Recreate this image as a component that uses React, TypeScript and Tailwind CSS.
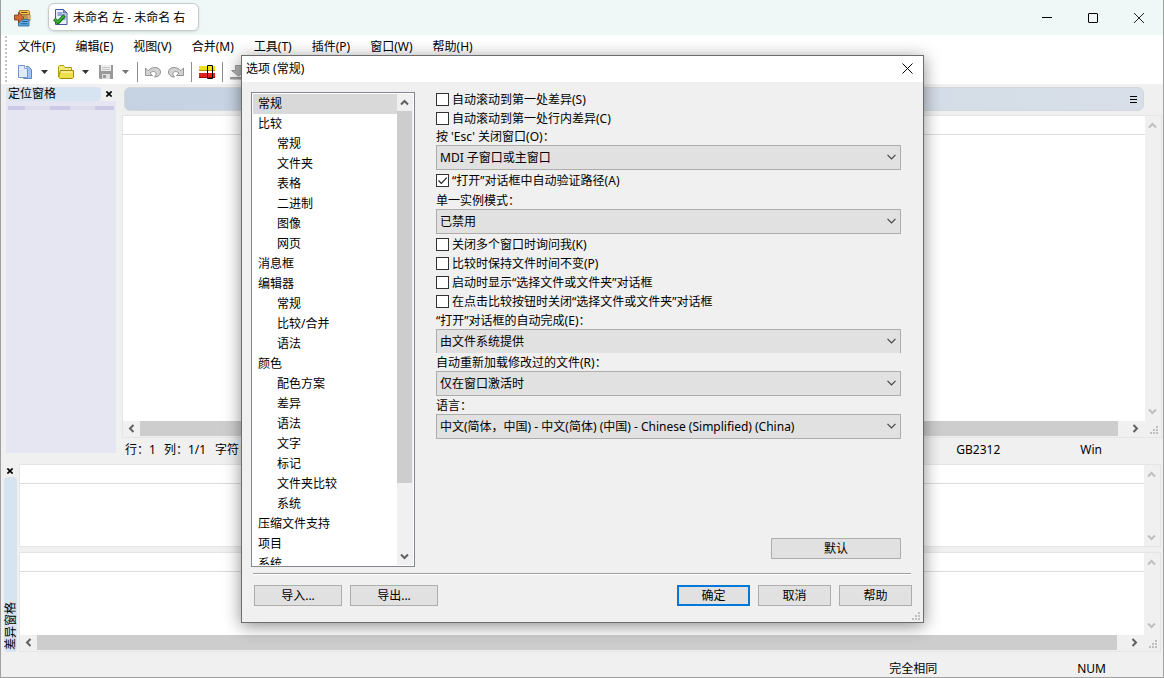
import React from "react";

const FONT = "font-['Noto_Sans','Noto_Sans_CJK_SC',sans-serif]";

const menus = ["文件(F)", "编辑(E)", "视图(V)", "合并(M)", "工具(T)", "插件(P)", "窗口(W)", "帮助(H)"];

const tree = [
  { label: "常规", level: 0 },
  { label: "比较", level: 0 },
  { label: "常规", level: 1 },
  { label: "文件夹", level: 1 },
  { label: "表格", level: 1 },
  { label: "二进制", level: 1 },
  { label: "图像", level: 1 },
  { label: "网页", level: 1 },
  { label: "消息框", level: 0 },
  { label: "编辑器", level: 0 },
  { label: "常规", level: 1 },
  { label: "比较/合并", level: 1 },
  { label: "语法", level: 1 },
  { label: "颜色", level: 0 },
  { label: "配色方案", level: 1 },
  { label: "差异", level: 1 },
  { label: "语法", level: 1 },
  { label: "文字", level: 1 },
  { label: "标记", level: 1 },
  { label: "文件夹比较", level: 1 },
  { label: "系统", level: 1 },
  { label: "压缩文件支持", level: 0 },
  { label: "项目", level: 0 },
  { label: "系统", level: 0 },
];

const arrowPaths = {
  up: "M1 6.5 4.5 3 8 6.5",
  down: "M1 2.5 4.5 6 8 2.5",
  left: "M6.5 1 3 4.5 6.5 8",
  right: "M2.5 1 6 4.5 2.5 8",
};

const Arrow = ({ dir, color = "#606060" }: { dir: keyof typeof arrowPaths; color?: string }) => (
  <svg width="9" height="9" viewBox="0 0 9 9" fill="none" stroke={color} strokeWidth="2">
    <path d={arrowPaths[dir]} />
  </svg>
);

const Grip = () => (
  <svg width="8" height="8" viewBox="0 0 8 8" fill="#bfbfbf" shapeRendering="crispEdges">
    <path d="M6 0h2v2H6zM3 3h2v2H3zM6 3h2v2H6zM0 6h2v2H0zM3 6h2v2H3zM6 6h2v2H6z" />
  </svg>
);

const CloseX = () => (
  <svg width="6" height="6" viewBox="0 0 6 6" stroke="#000" strokeWidth="1.6">
    <path d="M.4.4l5.2 5.2M5.6.4.4 5.6" />
  </svg>
);

const Caret = ({ color = "#333" }: { color?: string }) => (
  <svg width="7" height="4" viewBox="0 0 7 4" fill={color}>
    <path d="M0 0h7L3.5 4z" />
  </svg>
);

// Text area with a ruler line, a disabled vertical bar and an optional horizontal bar
const Editor = ({ className, hscroll }: { className: string; hscroll?: boolean }) => (
  <div className={`flex border border-[#e5e5e5] ${className}`}>
    <div className="flex min-w-0 flex-1 flex-col">
      <div className="flex-1 bg-white">
        <div className="h-[19px] border-b border-[#dcdcdc]" />
      </div>
      {hscroll && (
        <div className="flex h-4 pb-px">
          <div className="grid w-[17px] place-items-center pr-px">
            <Arrow dir="left" />
          </div>
          <div className="flex-1 bg-[#cdcdcd]" />
          <div className="grid w-[27px] place-items-center pl-2">
            <Arrow dir="right" />
          </div>
        </div>
      )}
    </div>
    <div className="flex w-4 flex-col items-center pt-[5px] pr-[2px]">
      <Arrow dir="up" color="#bfbfbf" />
      <span className="flex-1" />
      <Arrow dir="down" color="#bfbfbf" />
      {hscroll ? (
        <div className="flex h-[21px] items-end pb-[3px] pl-1">
          <Grip />
        </div>
      ) : (
        <div className="h-1" />
      )}
    </div>
  </div>
);

const Check = ({ label, checked }: { label: string; checked?: boolean }) => (
  <label className="flex h-[19px] items-center gap-[3px]">
    <span className="grid">
      <input
        type="checkbox"
        defaultChecked={checked}
        className="peer col-start-1 row-start-1 size-[13px] appearance-none border border-[#333] bg-white"
      />
      <svg
        viewBox="0 0 13 13"
        className="pointer-events-none invisible col-start-1 row-start-1 size-[13px] peer-checked:visible"
        fill="none"
        stroke="#222"
        strokeWidth="1.2"
      >
        <path d="M2.5 6.5 5.3 9.3 10.8 3.6" />
      </svg>
    </span>
    <span className="pt-[2px]">{label}</span>
  </label>
);

const Field = ({ id, label, value, cut }: { id: string; label: string; value: string; cut?: boolean }) => (
  <div>
    <label htmlFor={id} className="block h-[17px] leading-[17px]">
      {label}
    </label>
    <div className="grid">
      <select
        id={id}
        className={`col-start-1 row-start-1 w-full appearance-none border-x border-t border-[#adadad] bg-[#e1e1e1] pt-[2px] pl-[3px] ${
          cut ? "h-6" : "h-[25px] border-b"
        }`}
      >
        <option>{value}</option>
      </select>
      <svg
        width="9"
        height="6"
        viewBox="0 0 9 6"
        className="pointer-events-none col-start-1 row-start-1 mr-[5px] self-center justify-self-end"
        fill="none"
        stroke="#444"
        strokeWidth="1.2"
      >
        <path d="M.5.8 4.5 4.8 8.5.8" />
      </svg>
    </div>
  </div>
);

const Button = ({ children, className }: { children: React.ReactNode; className: string }) => (
  <button type="button" className={`h-[21px] bg-[#e1e1e1] leading-[17px] ${className}`}>
    {children}
  </button>
);

const TitleBar = () => (
  <header className="flex h-[35px] shrink-0 bg-[#eff7f7]">
    <div className="flex items-center pl-[13px]">
      <svg width="17" height="18" viewBox="0 0 17 18">
        <path d="M5.5 1.5h9l1 1v6h-10z" fill="#ffc14d" stroke="#8a6420" strokeWidth=".8" />
        <path d="M6.5 5.500h9.500v6H6.500z" fill="#ffd890" stroke="#8a6420" strokeWidth=".8" />
        <path d="M4.5 10.500h10.500v6.500H4.500z" fill="#65b1e8" stroke="#235f96" strokeWidth=".8" />
        <path d="M7 3.500h6.500M9 7h5.500M9 9h5.500" stroke="#6a5120" />
        <path d="M8 12.500h5.500M6.500 14.800h7" stroke="#185789" />
        <path d="M.5 6h4V3.200L10 8.600l-5.500 5.400v-3h-4z" fill="#d66b32" stroke="#6e3516" strokeWidth=".8" />
      </svg>
      <button
        type="button"
        className="mb-px ml-[17px] flex h-[28px] w-[151px] items-center gap-[5px] rounded-md border border-[#c6cccc] bg-white pl-1 shadow-sm"
      >
        <svg width="15" height="16" viewBox="0 0 15 16">
          <path d="M2.500.5h8l3.500 3.500v11.500H2.500z" fill="#e9eefb" stroke="#4257a5" />
          <path d="M10.500.5V4H14z" fill="#8f9fdb" stroke="#4257a5" strokeWidth=".7" />
          <path d="M4.500 4h5M4.500 6h8M8 8h4.500M9 10h3.500" stroke="#3f5bb5" />
          <path d="M1.200 10 5 13.500 11.500 6.500" fill="none" stroke="#146b14" strokeWidth="3.600" />
          <path d="M1.500 10.200 5 13.200 11 6.800" fill="none" stroke="#35b52f" strokeWidth="1.800" />
        </svg>
        <span className="pt-[2px]">未命名 左 - 未命名 右</span>
      </button>
    </div>
    <div className="ml-auto flex pr-px">
      <button type="button" aria-label="最小化" className="grid w-[46px] place-items-center">
        <svg width="10" height="10" viewBox="0 0 10 10" stroke="#000">
          <path d="M0 4.500h10" />
        </svg>
      </button>
      <button type="button" aria-label="最大化" className="grid w-[46px] place-items-center">
        <svg width="10" height="10" viewBox="0 0 10 10" stroke="#000" fill="none">
          <rect x=".5" y=".5" width="9" height="9" rx=".5" />
        </svg>
      </button>
      <button type="button" aria-label="关闭" className="grid w-[46px] place-items-center">
        <svg width="10" height="10" viewBox="0 0 10 10" stroke="#222">
          <path d="M0 0l10 10M10 0 0 10" />
        </svg>
      </button>
    </div>
  </header>
);

const Separator = () => <span className="h-5 w-px bg-[#8c8c8c]" />;

const Toolbar = () => (
  <div className="flex h-[25px] items-center">
    <div className="flex items-center gap-[9px] pl-[10px]">
      <button type="button" aria-label="新建" className="flex items-center gap-2">
        <svg width="16" height="16" viewBox="0 0 16 16">
          <path d="M6.500 2.500h5l3 3v9h-8z" fill="#9fc3f2" stroke="#5f86c2" />
          <path d="M1.500 1.500h6l3 3v9h-9z" fill="#dfebfb" stroke="#6f96d0" />
          <path d="M7.500 1.500v3h3" fill="#fff" stroke="#6f96d0" strokeWidth=".8" />
        </svg>
        <Caret />
      </button>
      <button type="button" aria-label="打开" className="flex items-center gap-2">
        <svg width="17" height="16" viewBox="0 0 17 16">
          <path d="M1.500 13V2.500l1-1h4l1.500 2h6.500V7" fill="#f3e97a" stroke="#b39c1c" />
          <path d="M3.500 6.500h13v7l-1 1H3.500l-2-1.500z" fill="#eee04a" stroke="#a08a12" />
          <path d="M4.500 8h11" stroke="#fffbc0" />
        </svg>
        <Caret />
      </button>
      <button type="button" aria-label="保存" className="flex items-center gap-2">
        <svg width="16" height="16" viewBox="0 0 16 16">
          <path d="M1 1h14v14H2l-1-1z" fill="#999" />
          <path d="M3 1h10v6H3z" fill="#efefef" />
          <path d="M4 3.500h8M4 5.500h8" stroke="#c4c4c4" />
          <path d="M4 10h8v5H4z" fill="#e0e0e0" />
          <path d="M5 11h3v3H5z" fill="#999" />
        </svg>
        <Caret color="#777" />
      </button>
    </div>
    <div className="flex items-center gap-[7px] pl-2">
      <Separator />
      <button type="button" aria-label="撤销">
        <svg width="16" height="14" viewBox="0 0 16 14" fill="#d2d2d2" stroke="#8b8b8b" strokeWidth=".9">
          <path d="M.5 3v7.500h7L5 8c3-2.600 6.500-1.500 6 1.500-.2 1-.8 1.800-1.500 2.500 4 0 6-2.300 6-5 0-5-7.500-6.500-12.300-1.300z" />
        </svg>
      </button>
      <button type="button" aria-label="重做">
        <svg width="16" height="14" viewBox="0 0 16 14" fill="#d2d2d2" stroke="#8b8b8b" strokeWidth=".9">
          <path d="M15.500 3v7.500h-7L11 8C8 5.400 4.500 6.500 5 9.500c.2 1 .8 1.800 1.500 2.500-4 0-6-2.300-6-5C.5 2 8 .5 12.800 5.700z" />
        </svg>
      </button>
      <Separator />
      <button type="button" aria-label="当前差异">
        <svg width="16" height="16" viewBox="0 0 16 16">
          <path d="M0 2h16v5H0z" fill="#f0e016" />
          <path d="M0 6h16v1H0z" fill="#b39700" />
          <path d="M0 9h16v5H0z" fill="#e51f1f" />
          <path d="M0 13h16v1H0z" fill="#9c0808" />
          <path d="M8.500 1.500h5v13h-5z" fill="none" stroke="#000" />
        </svg>
      </button>
      <Separator />
      <button type="button" aria-label="下一差异">
        <svg width="16" height="16" viewBox="0 0 16 16" fill="#b5b5b5" stroke="#999">
          <path d="M5.500 1.500h6v5h4L8.500 12 1.500 6.500h4z" />
          <path d="M.5 13.500h15v1.500H.5z" />
        </svg>
      </button>
    </div>
  </div>
);

const OptionsDialog = () => (
  <div className="absolute inset-0 flex items-center justify-center pl-px">
    <section
      role="dialog"
      aria-label="选项 (常规)"
      className="flex h-[568px] w-[683px] flex-col border border-[#6d6d6d] bg-[#f0f0f0] shadow-[0_3px_16px_rgba(0,0,0,0.45)]"
    >
      <div className="flex h-[26px] items-center justify-between bg-white pr-[10px] pl-1">
        <h1>选项 (常规)</h1>
        <button type="button" aria-label="关闭">
          <svg width="11" height="11" viewBox="0 0 11 11" stroke="#000">
            <path d="M.5.5l10 10M10.500.5l-10 10" />
          </svg>
        </button>
      </div>

      <div className="flex min-h-0 flex-1 gap-[21px] pt-2 pr-[22px] pb-[6px] pl-[9px]">
        <div className="mt-[2px] flex w-[164px] border border-[#828790] bg-white p-px">
          <ul className="min-w-0 flex-1 overflow-hidden">
            {tree.map((item, index) => (
              <li
                key={index}
                className={`h-5 leading-5 ${item.level ? "pl-6" : "pl-[5px]"} ${index === 0 ? "bg-[#d9d9d9]" : ""}`}
              >
                {item.label}
              </li>
            ))}
          </ul>
          <div className="flex w-4 flex-col bg-[#f0f0f0]">
            <div className="grid h-[17px] place-items-center pr-px">
              <Arrow dir="up" />
            </div>
            <div className="mr-px flex-1 bg-[#cdcdcd]" />
            <div className="flex h-[82px] items-end justify-center pr-[2px] pb-1">
              <Arrow dir="down" />
            </div>
          </div>
        </div>

        <form className="flex flex-1 flex-col">
          <Check label="自动滚动到第一处差异(S)" />
          <Check label="自动滚动到第一处行内差异(C)" />
          <Field id="esc" label="按 'Esc' 关闭窗口(O)：" value="MDI 子窗口或主窗口" />
          <div className="pt-px pb-[2px]">
            <Check label="“打开”对话框中自动验证路径(A)" checked />
          </div>
          <Field id="instance" label="单一实例模式：" value="已禁用" />
          <div className="pt-px pb-px">
            <Check label="关闭多个窗口时询问我(K)" />
            <Check label="比较时保持文件时间不变(P)" />
            <Check label="启动时显示“选择文件或文件夹”对话框" />
            <Check label="在点击比较按钮时关闭“选择文件或文件夹”对话框" />
          </div>
          <div className="flex flex-col gap-px">
            <Field id="complete" label="“打开”对话框的自动完成(E)：" value="由文件系统提供" cut />
            <Field id="reload" label="自动重新加载修改过的文件(R)：" value="仅在窗口激活时" />
            <Field
              id="language"
              label="语言："
              value="中文(简体，中国) - 中文(简体) (中国) - Chinese (Simplified) (China)"
            />
          </div>
          <div className="mt-auto flex justify-end pb-2">
            <Button className="w-[130px] border border-[#adadad]">默认</Button>
          </div>
        </form>
      </div>

      <div className="mr-3 ml-[11px] h-[2px] border-b border-white bg-[#a0a0a0]" />
      <div className="flex gap-2 pt-[10px] pr-[11px] pl-3">
        <Button className="w-[88px] border border-[#adadad]">导入...</Button>
        <Button className="w-[88px] border border-[#adadad]">导出...</Button>
        <Button className="ml-auto w-[73px] border-2 border-[#0078d7]">确定</Button>
        <Button className="w-[73px] border border-[#adadad]">取消</Button>
        <Button className="w-[73px] border border-[#adadad]">帮助</Button>
      </div>
      <div className="flex h-4 items-end justify-end pr-[3px] pb-[2px]">
        <Grip />
      </div>
    </section>
  </div>
);

export default function App() {
  return (
    <div
      className={`relative flex h-screen min-h-[600px] flex-col overflow-hidden border-x border-b border-[#a0a0a0] bg-[#f0f0f0] text-xs text-black ${FONT}`}
    >
      <TitleBar />

      {/* Menu and toolbar */}
      <div className="flex h-[49px] shrink-0 bg-white pl-1">
        <div className="my-px w-[2px] bg-[repeating-linear-gradient(to_bottom,#c4c4c4_0px,#c4c4c4_2px,#fff_2px,#fff_4px)]" />
        <div>
          <nav className="flex h-6 items-center gap-5 pl-[11px]">
            {menus.map((menu) => (
              <button key={menu} type="button" className="whitespace-nowrap">
                {menu}
              </button>
            ))}
          </nav>
          <Toolbar />
        </div>
      </div>

      {/* Location pane and editors */}
      <main className="flex min-h-0 flex-1 gap-[6px] pr-px pl-[5px]">
        <aside className="flex w-[110px] flex-col pt-[3px] pb-2">
          <div className="flex h-[14px] items-center justify-between pr-1">
            <h2 className="w-[95px] rounded bg-[#d6e3f1] pl-[2px] leading-[14px]">定位窗格</h2>
            <button type="button" aria-label="关闭定位窗格">
              <CloseX />
            </button>
          </div>
          <div className="flex-1 bg-[#e6e6f2] px-[2px] pt-[5px]">
            <div className="flex h-1 rounded-sm bg-[#dddcec]">
              <span className="w-[17px] bg-[#cbc9e6]" />
              <span className="ml-[25px] w-5 bg-[#cbc9e6]" />
              <span className="ml-[25px] flex-1 bg-[#cbc9e6]" />
            </div>
          </div>
        </aside>

        <div className="flex min-w-0 flex-1 flex-col pt-[3px]">
          <div className="mr-[18px] mb-1 ml-[2px] flex h-6 items-center justify-end rounded-md border border-[#d3d7db] bg-linear-to-r from-[#c5d2e2] to-[#d8dfe8] pr-[6px]">
            <button type="button" aria-label="标签列表">
              <svg width="7" height="7" viewBox="0 0 7 7" stroke="#000">
                <path d="M0 .5h7M0 3.500h7M0 6.500h7" />
              </svg>
            </button>
          </div>
          <Editor className="flex-1" hscroll />
          <div className="flex h-[23px] items-center pr-[60px] pl-[3px]">
            <span className="w-[39px]">行：1</span>
            <span className="w-[51px]">列：1/1</span>
            <span>字符：</span>
            <span className="ml-auto w-[124px]">GB2312</span>
            <span>Win</span>
          </div>
        </div>
      </main>

      {/* Difference pane */}
      <section className="flex h-[191px] shrink-0 gap-[2px] pt-[3px] pr-[2px] pl-[3px]">
        <div className="flex w-[13px] flex-col">
          <button type="button" aria-label="关闭差异窗格" className="h-[13px] pl-[3px]">
            <CloseX />
          </button>
          <h2 className="w-[13px] flex-1 rotate-180 rounded bg-[#d6e3f1] pt-[2px] leading-[13px] [text-orientation:sideways] [writing-mode:vertical-rl]">
            差异窗格
          </h2>
        </div>
        <div className="flex flex-1 flex-col gap-[5px]">
          <Editor className="h-[83px]" />
          <Editor className="flex-1" hscroll />
        </div>
      </section>

      <footer className="flex h-[25px] shrink-0 items-center pt-2 pr-[57px]">
        <span className="ml-auto w-[188px]">完全相同</span>
        <span>NUM</span>
      </footer>

      <OptionsDialog />
    </div>
  );
}
